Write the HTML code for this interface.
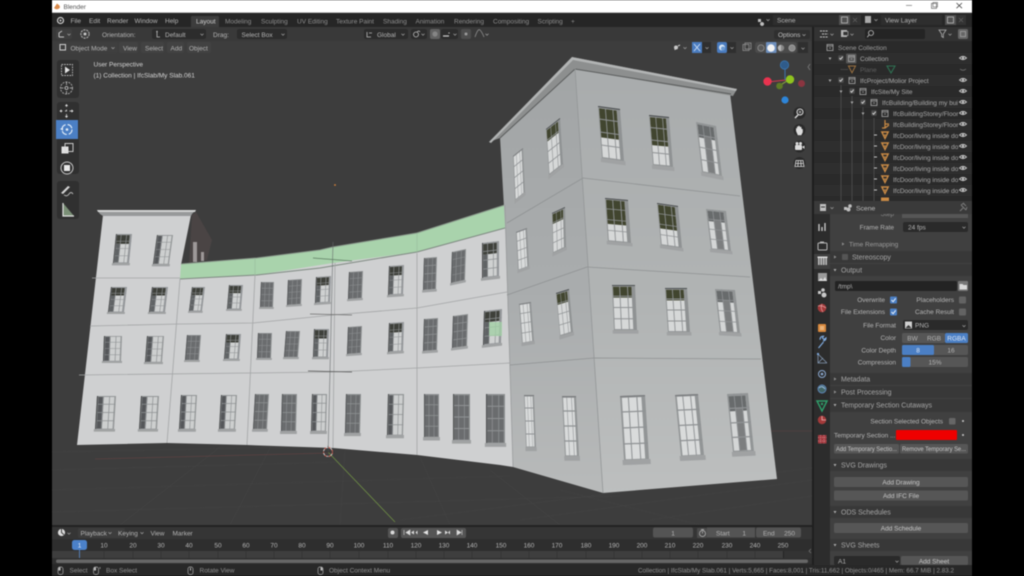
<!DOCTYPE html>
<html><head><meta charset="utf-8"><title>Blender</title>
<style>
html,body{margin:0;padding:0;background:#000;width:1024px;height:576px;overflow:hidden}
svg{display:block;filter:blur(.45px)}
text{font-family:"Liberation Sans",sans-serif;font-size:6.5px;fill:#b4b4b4}
.d{fill:#8e8e8e}.w{fill:#d8d8d8}.m{text-anchor:middle}.e{text-anchor:end}
.h{font-size:7px;fill:#a6a6a6}
.o{fill:#a8a8a8}
</style></head><body>
<svg width="1024" height="576" viewBox="0 0 1024 576" xmlns="http://www.w3.org/2000/svg">
<defs>
<clipPath id="oc"><rect x="814" y="41" width="144" height="160"/></clipPath>
<linearGradient id="fg" x1="0" y1="0" x2="0" y2="1"><stop offset="0" stop-color="#a9acad"/><stop offset=".55" stop-color="#b1b4b4"/><stop offset="1" stop-color="#bdbfbf"/></linearGradient>
<linearGradient id="lg" x1="0" y1="0" x2="0" y2="1"><stop offset="0" stop-color="#a2a5a6"/><stop offset=".55" stop-color="#aaadae"/><stop offset="1" stop-color="#b8baba"/></linearGradient>
<path id="mu" d="M31 0h4v100h-4zM65 0h4v100h-4zM0 24h100v2H0zM0 49h100v2H0zM0 74h100v2H0z" fill="#8f9294"/>
<path id="fr" d="M-6 100h112v8H-6z" fill="#a0a2a3"/>
<g id="a"><use href="#fr"/><rect width="100" height="100" fill="#8c8f90"/><rect x="7" y="3" width="86" height="96" fill="#6a6c6e"/><use href="#mu"/><rect x="0" y="0" width="6" height="100" fill="#4c4e50"/></g>
<g id="b"><use href="#fr"/><rect width="100" height="100" fill="#94979a"/><rect x="7" y="4" width="80" height="94" fill="#cfd1d1"/><rect x="7" y="4" width="80" height="30" fill="#3e403a"/><rect x="7" y="34" width="26" height="64" fill="#606365"/><use href="#mu"/><rect width="6" height="100" fill="#4a4c4d"/></g>
<g id="g"><use href="#fr"/><rect width="100" height="100" fill="#949798"/><rect x="8" y="3" width="84" height="96" fill="#cdcfcf"/><rect x="8" y="3" width="28" height="96" fill="#55575a"/><use href="#mu"/><rect width="6" height="100" fill="#4a4c4d"/></g>
<g id="c"><use href="#fr"/><rect width="100" height="100" fill="#8f9293"/><rect x="4" y="4" width="80" height="94" fill="#d6d8d8"/><rect x="4" y="4" width="80" height="56" fill="#41452f"/><use href="#mu"/><rect y="0" width="100" height="2" fill="#45484a"/></g>
<g id="t"><use href="#fr"/><rect width="100" height="100" fill="#8f9293"/><rect x="4" y="4" width="80" height="94" fill="#d6d8d8"/><rect x="4" y="4" width="80" height="24" fill="#41452f"/><use href="#mu"/><rect y="0" width="100" height="2" fill="#45484a"/></g>
<g id="l"><use href="#fr"/><rect width="100" height="100" fill="#929596"/><rect x="7" y="3" width="78" height="96" fill="#d9dbdb"/><use href="#mu"/><rect y="0" width="100" height="2" fill="#7a7c7e"/></g>
<g id="f"><use href="#fr"/><rect width="100" height="100" fill="#929596"/><rect x="6" y="4" width="80" height="94" fill="#d4d6d6"/><rect x="6" y="4" width="80" height="26" fill="#686b6c"/><rect x="34" y="25" width="32" height="73" fill="#7c7e7f"/><use href="#mu"/></g>
<g id="eye"><path d="M-3.5 0Q0-3.2 3.5 0Q0 3.2-3.5 0Z" fill="none" stroke="#c4c4c4" stroke-width=".9"/><circle r="1.1" fill="#c4c4c4"/></g>
<g id="tri"><path d="M-1.5-1h3L0 1.5Z" fill="#a8a8a8"/></g>
<g id="tr"><path d="M-1-1.6v3.2L1.5 0Z" fill="#8a8a8a"/></g>
<g id="chk"><rect x="-2.7" y="-2.7" width="5.4" height="5.4" rx=".8" fill="#4d4d4d"/><path d="M-1.6 0L-.4 1.3L1.7-1.4" stroke="#e0e0e0" stroke-width=".9" fill="none"/></g>
<g id="coll"><rect x="-3" y="-3" width="6" height="6" fill="none" stroke="#a8a8a8" stroke-width=".8"/><path d="M-3-1.5h6M-1 .5h2" stroke="#a8a8a8" stroke-width=".8"/></g>
<g id="tm"><path d="M-3.2-3h6.4L0 3.4Z" fill="none" stroke="#c98a45" stroke-width="1.4"/><circle r=".8" fill="#d0954f"/></g>
<g id="dd"><path d="M-1.5-.8L0 .8L1.5-.8" stroke="#a0a0a0" stroke-width=".7" fill="none"/></g>
<g id="ns"><circle r="6" fill="#2a2a2a"/></g>
</defs>

<rect width="1024" height="576" fill="#000"/>
<!-- title bar -->
<rect x="52" width="920" height="13" fill="#fff"/>
<rect x="52" y="12.4" width="920" height=".8" fill="#9a9a9a"/>
<path d="M54 8L57 3.5L59.5 5.5L60 7.5Q58 10 55.500 9Z" fill="#d98b4c"/>
<text x="63.5" y="9" style="font-size:6.5px;fill:#555">Blender</text>
<path d="M906 5.400h6" stroke="#888" stroke-width=".8"/>
<rect x="931.5" y="3.400" width="5" height="5" fill="none" stroke="#666" stroke-width=".7"/><rect x="933" y="2.400" width="4.500" height="4.500" fill="none" stroke="#666" stroke-width=".6"/>
<path d="M956.5 3L962 8.200M962 3L956.5 8.200" stroke="#444" stroke-width=".8"/>

<!-- top bar -->
<rect x="52" y="13" width="920" height="14" fill="#262626"/>
<circle cx="60.5" cy="20.500" r="3" fill="none" stroke="#cfcfcf" stroke-width="1.200"/><circle cx="60.5" cy="20.500" r="1" fill="#cfcfcf"/>
<text x="70.5" y="23">File</text><text x="89" y="23">Edit</text><text x="107" y="23">Render</text><text x="134.5" y="23">Window</text><text x="165" y="23">Help</text>
<path d="M191 27v-10q0-1 1-1h26q1 0 1 1v10z" fill="#3d3d3d"/>
<text x="196" y="23.300" style="fill:#d0d0d0">Layout</text>
<text x="225" y="23.300" class="d">Modeling</text><text x="261" y="23.300" class="d">Sculpting</text><text x="297" y="23.300" class="d">UV Editing</text><text x="336" y="23.300" class="d">Texture Paint</text><text x="383" y="23.300" class="d">Shading</text><text x="415.5" y="23.300" class="d">Animation</text><text x="454" y="23.300" class="d">Rendering</text><text x="493" y="23.300" class="d">Compositing</text><text x="537.5" y="23.300" class="d">Scripting</text><text x="571" y="23.500" class="d">+</text>
<!-- scene -->
<path d="M758 19h3v3h-3zM762 22a2 2 0 1 0 .1 0z" fill="#bdbdbd"/><use href="#dd" x="768" y="20"/>
<rect x="773" y="15" width="67" height="10" fill="#2e2e2e"/><text x="777" y="22.500">Scene</text>
<rect x="839" y="15" width="11" height="10" fill="#505050"/><rect x="841.5" y="17" width="6" height="6" fill="none" stroke="#b8b8b8" stroke-width=".8"/>
<rect x="850" y="15" width="11" height="10" fill="#333"/><path d="M853 18l4 4m0-4l-4 4" stroke="#5c5c5c" stroke-width=".8"/>
<rect x="865" y="16" width="6" height="7" fill="#aaa"/><use href="#dd" x="876" y="20"/>
<rect x="881" y="15" width="61" height="10" fill="#2e2e2e"/><text x="885" y="22.500">View Layer</text>
<rect x="945" y="15" width="11" height="10" fill="#505050"/><rect x="947.5" y="17" width="6" height="6" fill="none" stroke="#b8b8b8" stroke-width=".8"/>
<rect x="956" y="15" width="10" height="10" fill="#333"/><path d="M959 18l4 4m0-4l-4 4" stroke="#5c5c5c" stroke-width=".8"/>

<!-- viewport background -->
<rect x="52" y="27" width="760" height="498" fill="#3d3d3d"/>
<rect x="52" y="27" width="760" height="14" fill="#393939"/>
<g stroke="#444" stroke-width=".6">
<path d="M52 452L300 447M52 470L340 462M52 490L510 476M52 512L620 496M400 520L812 468M520 520L812 480M650 520L812 496"/>
<path d="M120 525L220 447M230 525L270 448M340 525L345 450M450 525L420 457M560 525L490 470M700 525L560 490"/>
</g>
<path d="M95 459L330 453" stroke="#6a4444" stroke-width=".5"/>
<path d="M760 431L812 431" stroke="#5a4343" stroke-width=".5"/>
<circle cx="335" cy="185" r=".9" fill="#d9843a"/>

<!-- BUILDING -->
<path d="M192 215L196 212L212 240L207 260L189 263Z" fill="#4a4444"/>
<rect x="193" y="242" width="4" height="20" fill="#9d9898"/><rect x="201" y="252" width="3" height="9" fill="#9d9898"/>
<path d="M103 215L191 215L181 265L257 258L320 250L417 233L505 205L513 467L500 465L417 455L333 448L247 445L167 443L77 445Z" fill="#cfd0d1"/>
<path d="M97 210H196L192 214L191 216H103L100 214Z" fill="#97999a"/><path d="M97 210H196L195 212H98Z" fill="#d2d3d3"/>
<path d="M181 264L257 258L320 250L333 247L417 233L505 205L505 228L417 252L333 263L320 265L257 275L180 279Z" fill="#a9d3ac"/>
<path d="M181 264L257 258L320 250L333 247L417 233L505 205" stroke="#8c9d8e" stroke-width="1" fill="none"/>
<path d="M180 279L257 275L320 268L417 252L505 228" stroke="#7f8a82" stroke-width="1" fill="none"/>
<path d="M255 258V275M417 233V252" stroke="#9abd9d" stroke-width=".7"/>
<path d="M500 137L575 68L603 493L513 467L505 225Z" fill="url(#lg)"/>
<path d="M575 68L730 93L777 479L603 493Z" fill="url(#fg)"/>
<path d="M489 142L572 57L737 89L733 96L575 69L500 138Z" fill="#8d8f8f"/>
<path d="M489 142L572 57L737 89L736 91L573 60L491 143Z" fill="#b2b4b4"/>
<path d="M500 138L575 69L731 94" stroke="#5b5d5d" stroke-width="1" fill="none"/>
<g fill="none" stroke="#a3a5a6" stroke-width=".8">
<path d="M92 278H180"/>
<path d="M90 326L180 324L253 323L333 315L417 308L507 292"/>
<path d="M79 375L250 373L333 372L417 368L510 363"/>
<path d="M180 279L167 443M255 275L247 445M335 263L333 448M417 253L417 455"/>
<path d="M505 205L513 467" stroke="#9a9c9d"/>
<path d="M507 223L583 178L740 196M507 295L587 267L750 277M510 365L594 358L761 359" stroke="#8f9293"/>
<path d="M575 68L603 493" stroke="#939697"/>
</g>
<!-- windows -->
<use href="#b" transform="matrix(.16 0 -.03 .29 116 234)"/>
<use href="#g" transform="matrix(.16 0 -.04 .29 157 235)"/>
<use href="#b" transform="matrix(.16 0 -.03 .25 111 287)"/>
<use href="#b" transform="matrix(.16 0 -.03 .25 152 287)"/>
<use href="#b" transform="matrix(.13 0 -.03 .24 192 287)"/>
<use href="#b" transform="matrix(.14 0 -.02 .24 229 285)"/>
<use href="#a" transform="matrix(.13 0 -.01 .25 261 282)"/>
<use href="#a" transform="matrix(.14 -.01 -.01 .25 288 280)"/>
<use href="#b" transform="matrix(.15 -.01 -.01 .26 316 277)"/>
<use href="#a" transform="matrix(.14 -.01 -.01 .27 349 272)"/>
<use href="#b" transform="matrix(.15 -.01 -.01 .29 389 266)"/>
<use href="#a" transform="matrix(.13 -.01 -.01 .32 424 258)"/>
<use href="#a" transform="matrix(.14 -.03 -.01 .31 452 252)"/>
<use href="#b" transform="matrix(.17 -.02 0 .35 482 243)"/>
<use href="#g" transform="matrix(.18 0 -.01 .25 104 336)"/>
<use href="#g" transform="matrix(.17 0 -.02 .26 147 336)"/>
<use href="#a" transform="matrix(.14 0 -.02 .25 187 335)"/>
<use href="#b" transform="matrix(.15 0 -.02 .25 226 334)"/>
<use href="#a" transform="matrix(.14 0 -.01 .25 258 333)"/>
<use href="#a" transform="matrix(.14 0 -.02 .26 286 331)"/>
<use href="#b" transform="matrix(.15 0 -.01 .28 314 329)"/>
<use href="#a" transform="matrix(.14 -.01 -.01 .27 348 327)"/>
<use href="#b" transform="matrix(.15 -.01 -.01 .29 389 323)"/>
<use href="#a" transform="matrix(.14 -.01 -.01 .32 424 319)"/>
<use href="#a" transform="matrix(.15 -.02 -.01 .32 453 316)"/>
<use href="#b" transform="matrix(.18 -.02 -.01 .34 484 311)"/>
<rect x="489" y="322" width="13" height="14" fill="#a3cfa6" opacity=".8"/>
<use href="#g" transform="matrix(.19 0 -.02 .33 97 396)"/>
<use href="#g" transform="matrix(.18 0 -.02 .33 141 396)"/>
<use href="#g" transform="matrix(.16 0 -.02 .34 181 395)"/>
<use href="#g" transform="matrix(.16 0 -.02 .34 221 395)"/>
<use href="#a" transform="matrix(.14 0 -.02 .35 255 394)"/>
<use href="#a" transform="matrix(.15 0 -.01 .37 282 394)"/>
<use href="#g" transform="matrix(.15 0 -.01 .37 312 394)"/>
<use href="#a" transform="matrix(.15 0 -.01 .39 346 394)"/>
<use href="#g" transform="matrix(.16 0 -.01 .41 388 394)"/>
<use href="#a" transform="matrix(.15 0 0 .43 424 394)"/>
<use href="#a" transform="matrix(.17 0 0 .46 453 394)"/>
<use href="#a" transform="matrix(.19 0 0 .49 486 394)"/>
<use href="#l" transform="matrix(.10 -.08 .02 .44 513 156)"/>
<use href="#t" transform="matrix(.14 -.11 .03 .46 546 129)"/>
<use href="#l" transform="matrix(.11 -.04 .02 .38 516 232)"/>
<use href="#t" transform="matrix(.13 -.06 .01 .40 552 213)"/>
<use href="#l" transform="matrix(.12 -.02 .03 .39 519 304)"/>
<use href="#t" transform="matrix(.13 -.04 .04 .43 556 293)"/>
<use href="#l" transform="matrix(.10 0 .02 .52 524 395)"/>
<use href="#l" transform="matrix(.14 0 .03 .60 562 396)"/>
<use href="#c" transform="matrix(.22 .03 .04 .52 598 106)"/>
<use href="#c" transform="matrix(.20 .02 .04 .50 649 115)"/>
<use href="#f" transform="matrix(.20 .04 .06 .50 696 122)"/>
<use href="#c" transform="matrix(.23 .02 .03 .43 605 198)"/>
<use href="#c" transform="matrix(.21 .03 .04 .42 657 203)"/>
<use href="#f" transform="matrix(.20 .02 .05 .40 706 209)"/>
<use href="#t" transform="matrix(.23 0 .02 .45 612 285)"/>
<use href="#t" transform="matrix(.22 0 .03 .44 665 288)"/>
<use href="#f" transform="matrix(.20 .01 .05 .43 715 289)"/>
<use href="#l" transform="matrix(.25 -.01 .04 .64 620 396)"/>
<use href="#l" transform="matrix(.23 -.01 .06 .61 675 395)"/>
<use href="#f" transform="matrix(.21 -.01 .06 .58 727 394)"/>

<!-- object origin lines -->
<path d="M333 242L328 457" stroke="#666a6b" stroke-width=".7" opacity=".8"/>
<path d="M313 258L352 261" stroke="#5f7d62" stroke-width=".8"/>
<path d="M310 314L352 315" stroke="#6f6f6f" stroke-width=".8"/>
<path d="M308 371L352 372" stroke="#555" stroke-width=".8"/>
<path d="M328 452L395 522" stroke="#6f8f45" stroke-width=".8"/>
<circle cx="328" cy="452" r="4.500" fill="none" stroke="#d8d8d8" stroke-width=".9"/>
<circle cx="328" cy="452" r="4.500" fill="none" stroke="#c84a3a" stroke-width=".9" stroke-dasharray="2 2.300"/>
<path d="M328 446V458M322 452H334" stroke="#333" stroke-width=".5"/>

<!-- tool settings -->
<rect x="56" y="29" width="16" height="10" rx="2" fill="#3f3f3f"/><path d="M59 37v-4l3-2M59 37h5" stroke="#c4c4c4" stroke-width="1" fill="none"/><use href="#dd" x="69" y="34.500"/>
<circle cx="85" cy="34" r="5" fill="#444"/><circle cx="85" cy="34" r="4.200" fill="none" stroke="#c5c5c5" stroke-width=".8" stroke-dasharray="2 1"/><circle cx="85" cy="34" r="1.400" fill="#d0d0d0"/>
<text x="102" y="37">Orientation:</text>
<rect x="152" y="29" width="54" height="10" rx="2" fill="#2c2c2c"/><path d="M157 32v5h3" stroke="#bbb" stroke-width=".8" fill="none"/><circle cx="157" cy="31.500" r=".8" fill="#bbb"/>
<text x="165" y="37">Default</text><use href="#dd" x="202" y="34.500"/>
<text x="213" y="37">Drag:</text>
<rect x="237" y="29" width="50" height="10" rx="2" fill="#2c2c2c"/><text x="241.500" y="37">Select Box</text><use href="#dd" x="283" y="34.500"/>
<rect x="364" y="29" width="44" height="10" rx="2" fill="#2c2c2c"/><path d="M367 32v5h4M369 33h3" stroke="#bbb" stroke-width=".8" fill="none"/><text x="377" y="37">Global</text><use href="#dd" x="403" y="34.500"/>
<rect x="411" y="29" width="16" height="10" rx="2" fill="#2c2c2c"/><circle cx="416" cy="34.500" r="2.500" fill="none" stroke="#bbb" stroke-width=".8"/><path d="M417 32q2-2 3 0" stroke="#bbb" stroke-width=".7" fill="none"/><use href="#dd" x="423" y="34.500"/>
<rect x="430" y="29" width="10" height="10" rx="2" fill="#626262"/><circle cx="435" cy="34" r="2.600" fill="#858585"/>
<rect x="441" y="29" width="17" height="10" rx="2" fill="#2c2c2c"/><path d="M443 36h6M449 32.500v1" stroke="#cacaca" stroke-width="1.200"/><use href="#dd" x="455" y="34.500"/>
<rect x="461" y="29" width="10" height="10" rx="2" fill="#4d4d4d"/><circle cx="466" cy="34" r="1.500" fill="#9b9b9b"/>
<path d="M475 37Q478 28 480 30T484 37" stroke="#8d8d8d" stroke-width=".8" fill="none"/><use href="#dd" x="487" y="34.500"/>
<rect x="774" y="30" width="36" height="9" rx="2" fill="#2f2f2f"/><text x="778" y="37" style="fill:#c2c2c2">Options</text><use href="#dd" x="804" y="35"/>

<!-- view header -->
<rect x="57" y="42" width="61" height="11" rx="2" fill="#3f3f3f"/>
<rect x="60" y="44.500" width="5.500" height="5.500" fill="none" stroke="#cfcfcf" stroke-width="1"/><text x="70.500" y="50.500">Object Mode</text><use href="#dd" x="113" y="48"/>
<rect x="119" y="42" width="19" height="11" rx="2" fill="#424242"/><text x="123" y="50.500">View</text>
<rect x="141" y="42" width="23" height="11" rx="2" fill="#424242"/><text x="145" y="50.500">Select</text>
<rect x="167" y="42" width="17" height="11" rx="2" fill="#424242"/><text x="170.500" y="50.500">Add</text>
<rect x="187" y="42" width="24" height="11" rx="2" fill="#424242"/><text x="189" y="50.500">Object</text>
<!-- viewport header right -->
<circle cx="676" cy="47.500" r="2" fill="#c9c9c9"/><path d="M675 50v-1M678 46l2-1" stroke="#c9c9c9" stroke-width="1"/><use href="#dd" x="685" y="48"/>
<rect x="692" y="42" width="10" height="11" fill="#4a7cbf"/><path d="M694 44l6 7m0-7l-6 7" stroke="#cfe0f5" stroke-width=".9"/>
<rect x="702" y="42" width="9" height="11" fill="#2f2f2f"/><use href="#dd" x="707" y="48"/>
<rect x="717" y="42" width="10" height="11" rx="2" fill="#4a7cbf"/><circle cx="722" cy="47.500" r="3" fill="#d8e6f5"/><circle cx="723" cy="48.500" r="2" fill="#6d9bd2"/>
<rect x="727" y="42" width="9" height="11" fill="#2f2f2f"/><use href="#dd" x="732" y="48"/>
<rect x="743" y="44.500" width="6" height="6" fill="none" stroke="#8f8f8f" stroke-width=".8"/><rect x="745" y="43" width="6" height="6" fill="none" stroke="#8f8f8f" stroke-width=".8"/>
<rect x="755" y="42" width="42" height="11" rx="3" fill="#4b4b4b"/>
<circle cx="761" cy="48" r="3.200" fill="#585858" stroke="#9a9a9a" stroke-width=".7"/><rect x="766" y="42" width="10.500" height="11" rx="1" fill="#6d8fbe"/><circle cx="771" cy="48" r="3.800" fill="#f2f2f2"/><circle cx="781" cy="48" r="3.200" fill="#888"/><path d="M781 44.800a3.200 3.200 0 0 0 0 6.400z" fill="#b5b5b5"/><circle cx="792" cy="48" r="3.200" fill="#8a8a8a" stroke="#aaa" stroke-width=".6"/>
<rect x="798" y="42" width="10" height="11" fill="#2f2f2f"/><use href="#dd" x="803" y="48.500"/>

<!-- overlay text -->
<text x="93.500" y="66.500" style="fill:#d4d4d4">User Perspective</text>
<text x="93.500" y="77.500" style="fill:#d4d4d4">(1) Collection | IfcSlab/My Slab.061</text>

<!-- left toolbar -->
<rect x="57" y="60" width="22" height="38" rx="3" fill="#303030"/>
<rect x="57" y="102" width="22" height="72" rx="3" fill="#303030"/>
<rect x="57" y="181" width="22" height="38" rx="3" fill="#303030"/>
<rect x="61.500" y="64.500" width="11" height="11" fill="none" stroke="#bbb" stroke-width=".9" stroke-dasharray="1.600 1"/><path d="M65 66.500v7l5-3.500z" fill="#e2e2e2"/>
<circle cx="66.500" cy="88" r="6" fill="none" stroke="#aaa" stroke-width=".9" stroke-dasharray="2 1"/><circle cx="66.500" cy="88" r="1.500" fill="none" stroke="#ccc" stroke-width=".8"/><path d="M66.500 82v3M66.500 91v3M60.500 88h3M69.500 88h3" stroke="#bbb" stroke-width=".8"/>
<path d="M66.500 105v12M60.500 111h12" stroke="#c0c0c0" stroke-width=".9" stroke-dasharray="2 2.500"/><path d="M66.500 104l-1.600 2h3.200zM66.500 118l-1.600-2h3.200zM59.500 111l2-1.600v3.200zM73.500 111l-2-1.600v3.200z" fill="#e2e2e2"/>
<rect x="56" y="120" width="22" height="19" fill="#4b7fc4"/>
<circle cx="67" cy="129.500" r="5" fill="none" stroke="#e3edf8" stroke-width="1.100" stroke-dasharray="6 2"/><circle cx="67" cy="129.500" r="1.300" fill="#e3edf8"/><path d="M60 129l3-1.600v3.200z" fill="#e3edf8"/>
<rect x="61.500" y="146.500" width="7" height="7" fill="#e0e0e0"/><rect x="65" y="143.500" width="8" height="8" fill="none" stroke="#d8d8d8" stroke-width=".9"/>
<circle cx="67" cy="168" r="6" fill="none" stroke="#c6c6c6" stroke-width="1"/><rect x="64" y="165" width="6" height="6" fill="#e8e8e8"/>
<path d="M64 195q3 2 5-1t4 0" stroke="#b4b4b4" stroke-width="1" fill="none"/><path d="M61 193l7-7 2 1-7 7z" fill="#d4d4d4"/>
<path d="M63 203V216H74Z" fill="#7a8f76"/><path d="M63 203V216H74" stroke="#e2e2e2" stroke-width="1.200" fill="none"/>

<!-- gizmo -->
<path d="M768 82L790 79.500" stroke="#d0394f" stroke-width="1.100"/>
<path d="M785 65V80" stroke="#3e6fa5" stroke-width="1.100"/>
<path d="M779 86L790 79" stroke="#83a03a" stroke-width="1.100"/>
<circle cx="801.500" cy="83.500" r="3.500" fill="#8a3540"/>
<circle cx="784.500" cy="65" r="4.200" fill="#2f5b8a" stroke="#3a74ad" stroke-width=".8"/>
<circle cx="779.500" cy="86" r="3.300" fill="#5d7a26"/>
<circle cx="767.500" cy="81.500" r="4.200" fill="#e8334f"/>
<circle cx="790" cy="79.500" r="4.200" fill="#8fc31f"/>
<circle cx="785" cy="100" r="3.600" fill="#2e85d8"/>
<path d="M810 64l-2 3 2 3" stroke="#777" stroke-width=".9" fill="none"/>
<use href="#ns" x="799.500" y="113"/><circle cx="800" cy="112" r="3" fill="none" stroke="#ddd" stroke-width="1"/><path d="M798 115l-3 3" stroke="#ddd" stroke-width="1.400"/><path d="M798.500 112h3M800 110.500v3" stroke="#ddd" stroke-width=".6"/>
<use href="#ns" x="799.500" y="130"/><path d="M796 131v-3l1 .5v-2l1.200.3v-1l1.500.2.300 1 1.300-.3.200 2 1.300.5v3l-1.500 3h-3.500z" fill="#dcdcdc"/>
<use href="#ns" x="799.500" y="146.500"/><rect x="795" y="145" width="7" height="5" rx="1" fill="#dcdcdc"/><circle cx="797" cy="143.500" r="1.500" fill="#dcdcdc"/><circle cx="800.500" cy="143.500" r="1.500" fill="#dcdcdc"/><path d="M802 147l2.500-1.500v3.500z" fill="#dcdcdc"/>
<use href="#ns" x="799.500" y="163"/><path d="M795 166.500l1-6h7l1 6zM796 163.500h7M798.300 160.500l-.5 6M800.700 160.500l.5 6" stroke="#ddd" stroke-width=".8" fill="none"/>

<!-- timeline -->
<rect x="52" y="525" width="761" height="2" fill="#222"/>
<rect x="52" y="527" width="761" height="12" fill="#353535"/>
<rect x="52" y="539" width="761" height="12" fill="#2e2e2e"/>
<rect x="52" y="551" width="761" height="7" fill="#3e3e3e"/>
<rect x="52" y="558" width="761" height="6" fill="#303030"/>
<rect x="56" y="559.500" width="752" height="3.500" rx="1.700" fill="#666"/>
<circle cx="61.500" cy="532.500" r="3.600" fill="#dcdcdc"/><path d="M61.500 529v3.500l2.500 2.200" stroke="#444" stroke-width="1" fill="none"/><use href="#dd" x="69" y="533.500"/>
<rect x="78" y="528" width="47" height="10" rx="2" fill="#3d3d3d"/><text x="80.500" y="535.500">Playback</text><use href="#dd" x="110" y="533"/>
<text x="118" y="535.500">Keying</text><use href="#dd" x="142" y="533"/>
<text x="150.500" y="535.500">View</text><text x="172.500" y="535.500">Marker</text>
<g stroke="#333" stroke-width=".6"><path d="M104 551v7M133 551v7M161 551v7M189 551v7M218 551v7M246 551v7M274 551v7M302 551v7M330 551v7M359 551v7M388 551v7M416 551v7M444 551v7M472 551v7M501 551v7M529 551v7M557 551v7M586 551v7M614 551v7M642 551v7M670 551v7M698 551v7M727 551v7M755 551v7"/></g>
<rect x="783" y="551" width="29" height="7" fill="#333"/><path d="M783.500 551v7" stroke="#1f1f1f" stroke-width=".7"/>
<g>
<text x="104" y="547.500" class="m">10</text><text x="133" y="547.500" class="m">20</text><text x="161" y="547.500" class="m">30</text><text x="189" y="547.500" class="m">40</text><text x="218" y="547.500" class="m">50</text><text x="246" y="547.500" class="m">60</text><text x="274" y="547.500" class="m">70</text><text x="302" y="547.500" class="m">80</text><text x="330" y="547.500" class="m">90</text><text x="359" y="547.500" class="m">100</text><text x="388" y="547.500" class="m">110</text><text x="416" y="547.500" class="m">120</text><text x="444" y="547.500" class="m">130</text><text x="472" y="547.500" class="m">140</text><text x="501" y="547.500" class="m">150</text><text x="529" y="547.500" class="m">160</text><text x="557" y="547.500" class="m">170</text><text x="586" y="547.500" class="m">180</text><text x="614" y="547.500" class="m">190</text><text x="642" y="547.500" class="m">200</text><text x="670" y="547.500" class="m">210</text><text x="698" y="547.500" class="m">220</text><text x="727" y="547.500" class="m">230</text><text x="755" y="547.500" class="m">240</text><text x="783" y="547.500" class="m">250</text>
</g>
<rect x="72" y="540" width="15" height="10" rx="2.500" fill="#4b81c9"/><text x="79.500" y="547.500" class="m" style="fill:#e6eef8">1</text><path d="M79.500 550v8" stroke="#5d8fd0" stroke-width=".8"/>
<rect x="388" y="528" width="10" height="10" rx="2" fill="#555"/><circle cx="392.500" cy="532.500" r="2" fill="#dadada"/>
<rect x="401" y="528" width="65" height="10" rx="2" fill="#555"/>
<path d="M404 530v5M410 530l-4 2.500 4 2.500z" fill="#dadada" stroke="#dadada" stroke-width=".6"/>
<path d="M414 530.500v4l-3-2zM415.500 532.500l2-2v4z" fill="#dadada"/>
<path d="M428 530v5l-5-2.500z" fill="#e2e2e2"/>
<path d="M437 530v5l5-2.500z" fill="#e2e2e2"/>
<path d="M445 530.500v4l3-2zM450 530.500v4l-2-2z" fill="#dadada"/>
<path d="M457 530v5l4-2.500zM462 530v5" fill="#dadada" stroke="#dadada" stroke-width=".6"/>
<rect x="653" y="527.500" width="40" height="10" rx="2" fill="#545454"/><text x="673" y="535.500" class="m">1</text>
<rect x="697" y="528" width="10" height="10" rx="1" fill="#4b4b4b"/><circle cx="702.500" cy="533.500" r="3" fill="none" stroke="#bbb" stroke-width=".7"/><path d="M702.500 533.500v-2M701 529.500h3" stroke="#bbb" stroke-width=".7"/>
<rect x="707" y="527.500" width="48" height="10" fill="#545454"/><rect x="756" y="527.500" width="45" height="10" rx="2" fill="#545454"/>
<text x="716" y="535.500">Start</text><text x="746" y="535.500" class="e">1</text><text x="763" y="535.500">End</text><text x="795" y="535.500" class="e">250</text>
<path d="M811 549l-2 2 2 2" stroke="#777" stroke-width=".7" fill="none"/>

<!-- status bar -->
<rect x="52" y="564" width="920" height="12" fill="#282828"/>
<rect x="58" y="567" width="5" height="7.500" rx="2" fill="none" stroke="#a8a8a8" stroke-width=".7"/><rect x="58.500" y="567.500" width="2" height="3" fill="#bbb"/>
<text x="69.500" y="572.500" class="d">Select</text>
<rect x="93.500" y="567" width="5" height="7.500" rx="2" fill="none" stroke="#a8a8a8" stroke-width=".7"/><rect x="94" y="567.500" width="2" height="3" fill="#bbb"/><path d="M100 567v2" stroke="#aaa" stroke-width=".7"/>
<text x="106" y="572.500" class="d">Box Select</text>
<rect x="188" y="567" width="5" height="7.500" rx="2" fill="none" stroke="#a8a8a8" stroke-width=".7"/><rect x="190" y="568" width="1" height="2.500" fill="#bbb"/>
<text x="199.500" y="572.500" class="d">Rotate View</text>
<rect x="318" y="567" width="5" height="7.500" rx="2" fill="none" stroke="#a8a8a8" stroke-width=".7"/><rect x="320.500" y="567.500" width="2" height="3" fill="#bbb"/>
<text x="329" y="572.500" class="d">Object Context Menu</text>
<text x="638" y="572.500" textLength="316" lengthAdjust="spacingAndGlyphs" class="d">Collection | IfcSlab/My Slab.061 | Verts:5,665 | Faces:8,001 | Tris:11,662 | Objects:0/465 | Mem: 66.7 MiB | 2.83.2</text>

<!-- outliner -->
<rect x="812" y="27" width="160" height="174" fill="#2a2a2a"/>
<rect x="814" y="27" width="158" height="14" fill="#333"/>
<path d="M820 31h8M822 34h6M820 37h8" stroke="#c2c2c2" stroke-width="1" stroke-dasharray="2 .8"/><use href="#dd" x="832" y="34.500"/>
<rect x="841" y="30" width="6" height="7" fill="#b4b4b4"/><rect x="843" y="31.500" width="5" height="4" fill="#333" stroke="#bbb" stroke-width=".6"/><use href="#dd" x="852" y="34.500"/>
<rect x="865" y="29" width="60" height="10" rx="2" fill="#242424"/><circle cx="871" cy="33" r="2.500" fill="none" stroke="#c0c0c0" stroke-width=".8"/><path d="M869 35l-1.800 2.200" stroke="#c0c0c0" stroke-width=".8"/>
<path d="M939 30h7l-2.700 4v3.500l-1.600-1V34z" fill="none" stroke="#b0b0b0" stroke-width=".8"/><use href="#dd" x="950" y="34.500"/>
<rect x="958" y="29" width="10" height="10" rx="1.500" fill="#666"/><rect x="960.500" y="31.500" width="5" height="5" fill="none" stroke="#a9a9a9" stroke-width=".7"/>
<g fill="#2e2e2e"><rect x="814" y="53" width="158" height="11"/><rect x="814" y="75" width="158" height="11"/><rect x="814" y="97" width="158" height="11"/><rect x="814" y="119" width="158" height="11"/><rect x="814" y="141" width="158" height="11"/><rect x="814" y="163" width="158" height="11"/><rect x="814" y="185" width="158" height="11"/></g>
<path d="M841 85V201M852 96V201M863 107V201M874 118V201" stroke="#5d5d5d" stroke-width=".6"/>
<path d="M841 69v.5h7" stroke="#5d5d5d" stroke-width=".6" fill="none"/>
<use href="#coll" x="830" y="47.500"/><text x="838" y="50" style="fill:#9d9d9d">Scene Collection</text>
<use href="#tri" x="830" y="58.500"/><use href="#chk" x="841" y="58"/><rect x="846" y="53.500" width="10.500" height="10" rx="1" fill="#555"/><use href="#coll" x="851.500" y="58.500"/><text x="860" y="61" style="fill:#aaa">Collection</text><use href="#eye" x="963" y="58"/>
<path d="M848.500 66h7L852 72.800z" fill="none" stroke="#9a7040" stroke-width="1"/><text x="860" y="72" style="fill:#5f5f5f">Plane</text><path d="M887 66h8L891 73z" fill="none" stroke="#2f6f52" stroke-width="1.100"/><path d="M960 69q3 2.500 6 0" stroke="#777" stroke-width=".8" fill="none"/>
<use href="#tri" x="830" y="80.500"/><use href="#chk" x="841" y="80"/><use href="#coll" x="852" y="80.500"/><use href="#eye" x="963" y="80"/>
<use href="#tri" x="841" y="91.500"/><use href="#chk" x="852" y="91"/><use href="#coll" x="863" y="91.500"/><use href="#eye" x="963" y="91"/>
<use href="#tri" x="852" y="102.500"/><use href="#chk" x="863" y="102"/><use href="#coll" x="874" y="102.500"/><use href="#eye" x="963" y="102"/>
<use href="#tri" x="863" y="113.500"/><use href="#chk" x="874" y="113"/><use href="#coll" x="885" y="113.500"/><use href="#eye" x="963" y="113"/>
<path d="M885 120v8h-3M885 128l4-3M885 124h4" stroke="#c98a45" stroke-width="1.200" fill="none"/><use href="#eye" x="963" y="124"/>
<path d="M874 135h3M874 146h3M874 157h3M874 168h3M874 179h3M874 190h3" stroke="#c5c5c5" stroke-width=".9"/>
<use href="#tm" x="885" y="135"/><use href="#eye" x="963" y="135"/>
<use href="#tm" x="885" y="146"/><use href="#eye" x="963" y="146"/>
<use href="#tm" x="885" y="157"/><use href="#eye" x="963" y="157"/>
<use href="#tm" x="885" y="168"/><use href="#eye" x="963" y="168"/>
<use href="#tm" x="885" y="179"/><use href="#eye" x="963" y="179"/>
<use href="#tm" x="885" y="190"/><use href="#eye" x="963" y="190"/>
<g clip-path="url(#oc)">
<text x="860" y="83" class="o">IfcProject/Molior Project</text>
<text x="871" y="94" class="o">IfcSite/My Site</text>
<text x="882" y="105" class="o">IfcBuilding/Building my building</text>
<text x="893" y="116" class="o">IfcBuildingStorey/Floor r</text>
<text x="893" y="127" class="o">IfcBuildingStorey/Floor r</text>
<text x="893" y="138" class="o">IfcDoor/living inside door</text>
<text x="893" y="149" class="o">IfcDoor/living inside door</text>
<text x="893" y="160" class="o">IfcDoor/living inside door</text>
<text x="893" y="171" class="o">IfcDoor/living inside door</text>
<text x="893" y="182" class="o">IfcDoor/living inside door</text>
<text x="893" y="193" class="o">IfcDoor/living inside door</text>
</g>
<rect x="881" y="197.500" width="8" height="3.500" fill="#c98a45"/>
<rect x="812" y="27" width="2" height="174" fill="#1e1e1e"/>

<!-- properties -->
<rect x="812" y="201" width="160" height="364" fill="#1f1f1f"/>
<rect x="814" y="214" width="16" height="351" fill="#2c2c2c"/>
<rect x="830" y="212" width="142" height="353" fill="#404040"/>
<text x="894" y="216" class="e d">Step</text>
<rect x="814" y="201" width="158" height="13" fill="#3a3a3a"/>
<rect x="820" y="204" width="6" height="7" fill="#c0c0c0"/><path d="M821 207h4" stroke="#3a3a3a" stroke-width="1"/><use href="#dd" x="832" y="208"/>
<circle cx="850" cy="206" r="1.800" fill="#bfbfbf"/><rect x="844" y="207" width="3" height="3" fill="#bfbfbf"/><circle cx="848.500" cy="209.500" r="2" fill="#bfbfbf"/>
<text x="856" y="210.500" style="font-size:6.800px;fill:#bcbcbc">Scene</text>
<path d="M960 211l3-3M961 205l5 5M963 203l3 3M961 205l3-2M966 210l1-3" stroke="#7d7d7d" stroke-width=".9" fill="none"/>
<rect x="902" y="214" width="66" height="4" fill="#565656"/>
<text x="894" y="229.500" class="e">Frame Rate</text>
<rect x="903" y="222" width="65" height="10" rx="2" fill="#2a2a2a"/><text x="908" y="229.500">24 fps</text><use href="#dd" x="964" y="227.500"/>
<use href="#tr" x="843" y="244"/><text x="849" y="246.500" style="fill:#9c9c9c">Time Remapping</text>
<g fill="#383838"><rect x="830" y="251" width="142" height="12"/><rect x="830" y="264" width="142" height="12"/><rect x="830" y="373" width="142" height="12"/><rect x="830" y="386" width="142" height="12"/><rect x="830" y="399" width="142" height="13"/><rect x="830" y="459" width="142" height="12"/><rect x="830" y="506" width="142" height="12"/><rect x="830" y="539" width="142" height="12"/></g>
<use href="#tr" x="835" y="257"/><rect x="842" y="254" width="6" height="6" rx="1" fill="#555"/><text x="852" y="259.500" class="h">Stereoscopy</text>
<use href="#tri" x="835" y="270"/><text x="841" y="272.500" class="h">Output</text>
<rect x="835" y="281" width="122" height="10" rx="1.500" fill="#232323"/><text x="838" y="288.500">/tmp\</text>
<rect x="958" y="281" width="10" height="10" rx="1" fill="#767676"/><path d="M959.500 284h3l1 1h3.500v4.500h-7.500z" fill="#d8d8d8"/>
<text x="885" y="302" class="e">Overwrite</text><rect x="890" y="296.500" width="7" height="7" rx="1" fill="#4b7fc4"/><path d="M891.500 300l1.600 1.700 2.600-3.400" stroke="#e6eef8" stroke-width="1" fill="none"/>
<text x="954" y="302" class="e">Placeholders</text><rect x="959" y="296.500" width="7" height="7" rx="1" fill="#636363"/>
<text x="885" y="314" class="e">File Extensions</text><rect x="890" y="308.500" width="7" height="7" rx="1" fill="#4b7fc4"/><path d="M891.500 312l1.600 1.700 2.600-3.400" stroke="#e6eef8" stroke-width="1" fill="none"/>
<text x="954" y="314" class="e">Cache Result</text><rect x="959" y="308.500" width="7" height="7" rx="1" fill="#636363"/>
<text x="896" y="327.500" class="e">File Format</text>
<rect x="903" y="320" width="65" height="10" rx="2" fill="#2a2a2a"/><rect x="905" y="321.500" width="7" height="7" fill="#d0d0d0"/><path d="M905.500 328l3-3 3 3z" fill="#333"/><text x="915" y="327.500">PNG</text><use href="#dd" x="964" y="326"/>
<text x="896" y="340" class="e">Color</text>
<rect x="902" y="333" width="43" height="10" rx="1.500" fill="#565656"/><rect x="945" y="333" width="23" height="10" rx="1.500" fill="#4b7fc4"/>
<text x="912.500" y="340.500" class="m">BW</text><text x="934" y="340.500" class="m">RGB</text><text x="956.500" y="340.500" class="m" style="fill:#dfe8f4">RGBA</text>
<text x="896" y="352.500" class="e">Color Depth</text>
<rect x="902" y="345" width="66" height="10" rx="1.500" fill="#565656"/><rect x="902" y="345" width="32" height="10" rx="1.500" fill="#4b7fc4"/><text x="918" y="352.500" class="m" style="fill:#dfe8f4">8</text><text x="951" y="352.500" class="m">16</text>
<text x="896" y="364.500" class="e">Compression</text>
<rect x="902" y="357" width="66" height="10" rx="1.500" fill="#565656"/><rect x="902" y="357" width="8.500" height="10" rx="1.500" fill="#4b7fc4"/><text x="935" y="364.500" class="m">15%</text>
<use href="#tr" x="835" y="379"/><text x="841" y="381.500" class="h">Metadata</text>
<use href="#tr" x="835" y="392"/><text x="841" y="394.500" class="h">Post Processing</text>
<use href="#tri" x="835" y="405"/><text x="841" y="407.500" class="h">Temporary Section Cutaways</text>
<text x="943" y="423.500" class="e">Section Selected Objects</text><rect x="949" y="418" width="6.500" height="6.500" rx="1" fill="#666"/><circle cx="963" cy="421" r="1" fill="#c8c8c8"/>
<text x="834" y="437.500">Temporary Section ...</text><rect x="896" y="430" width="61" height="10" rx="1" fill="#ef0000"/><circle cx="963" cy="435" r="1" fill="#c8c8c8"/>
<rect x="834" y="444" width="65" height="9.500" rx="1.500" fill="#565656"/><rect x="900" y="444" width="68" height="9.500" rx="1.500" fill="#565656"/>
<text x="836" y="451" textLength="61" lengthAdjust="spacingAndGlyphs" style="fill:#c8c8c8">Add Temporary Sectio...</text><text x="902" y="451" textLength="64" lengthAdjust="spacingAndGlyphs" style="fill:#c8c8c8">Remove Temporary Se...</text>
<use href="#tri" x="835" y="465"/><text x="841" y="467.500" class="h">SVG Drawings</text>
<rect x="834" y="477" width="134" height="10" rx="1.500" fill="#565656"/><text x="901" y="484.500" class="m" style="fill:#c8c8c8">Add Drawing</text>
<rect x="834" y="490.500" width="134" height="10" rx="1.500" fill="#565656"/><text x="901" y="498" class="m" style="fill:#c8c8c8">Add IFC File</text>
<use href="#tri" x="835" y="512"/><text x="841" y="514.500" class="h">ODS Schedules</text>
<rect x="834" y="523" width="134" height="10" rx="1.500" fill="#565656"/><text x="901" y="530.500" class="m" style="fill:#c8c8c8">Add Schedule</text>
<use href="#tri" x="835" y="545"/><text x="841" y="547.500" class="h">SVG Sheets</text>
<rect x="834" y="556" width="66" height="9" rx="1.500" fill="#2a2a2a"/><text x="838" y="563.500">A1</text><use href="#dd" x="897" y="561.500"/>
<rect x="901" y="556" width="67" height="9" rx="1.500" fill="#565656"/><text x="934" y="563.500" class="m" style="fill:#c8c8c8">Add Sheet</text>
<!-- prop tabs -->
<path d="M819 231v-7M822 231v-4M825 231v-8" stroke="#cfcfcf" stroke-width="1.300"/>
<rect x="814" y="254" width="16" height="15" fill="#404040"/>
<rect x="818" y="243" width="9" height="7" rx="1" fill="none" stroke="#b5b5b5" stroke-width="1"/><rect x="820" y="241.500" width="4" height="2" fill="#b5b5b5"/>
<rect x="818" y="258" width="9" height="7" fill="#b8b8b8"/><path d="M820 258v7M822.500 258v7M825 258v7" stroke="#404040" stroke-width=".7"/><rect x="817.500" y="256.500" width="10" height="1.500" fill="#ddd"/>
<rect x="818" y="273" width="9" height="8" fill="#9a9a9a"/><path d="M818 281l3-3 2 2 2-3 2 4z" fill="#dcdcdc"/>
<circle cx="823" cy="290" r="1.800" fill="#c8c8c8"/><rect x="818" y="291" width="3" height="3" fill="#c8c8c8"/><circle cx="824" cy="295" r="2.500" fill="#c8c8c8"/>
<circle cx="822" cy="308" r="4.300" fill="#a33a3a"/><path d="M818 306q4-1 8 2M822 304q-2 4 1 8" stroke="#e3a3a3" stroke-width=".7" fill="none"/>
<rect x="818" y="324" width="8" height="8" rx="1" fill="#d98a3e"/><rect x="820" y="326" width="4" height="4" fill="#e8b27a"/>
<path d="M818.500 348l5-6M823 341q3-.5 3-3l-2 1.500-1.500-1.500 1-1.800q-3.500 0-3.500 3.500" stroke="#7ea9dd" stroke-width="1.200" fill="none"/>
<path d="M818 354v9h9M818 354l9 9M818 363l5-5" stroke="#8296b0" stroke-width=".8" fill="none"/><circle cx="818" cy="354" r="1.100" fill="#7ea9dd"/>
<circle cx="822" cy="374" r="3.500" fill="none" stroke="#8aa8d0" stroke-width="1"/><circle cx="822" cy="374" r="1.300" fill="#8aa8d0"/>
<circle cx="822" cy="389" r="4" fill="#466" stroke="#5e86b8" stroke-width="1"/><path d="M819 388q3-3 6 1" stroke="#9fc0e6" stroke-width=".9" fill="none"/>
<path d="M817 401h10L822 411z" fill="none" stroke="#2f9a68" stroke-width="1.500"/><circle cx="822" cy="404" r="1.200" fill="#2f9a68"/>
<circle cx="822" cy="420" r="4.200" fill="#a33a3a"/><path d="M822 416v4h4" stroke="#eab6b6" stroke-width=".8" fill="none"/>
<rect x="818" y="435" width="8.500" height="8.500" fill="#a0393f"/><path d="M818 437.500h8.500M818 441h8.500M820.500 435v8.500M824 435v8.500" stroke="#d98c8f" stroke-width=".8" stroke-dasharray="1 1"/>
</svg>
</body></html>
